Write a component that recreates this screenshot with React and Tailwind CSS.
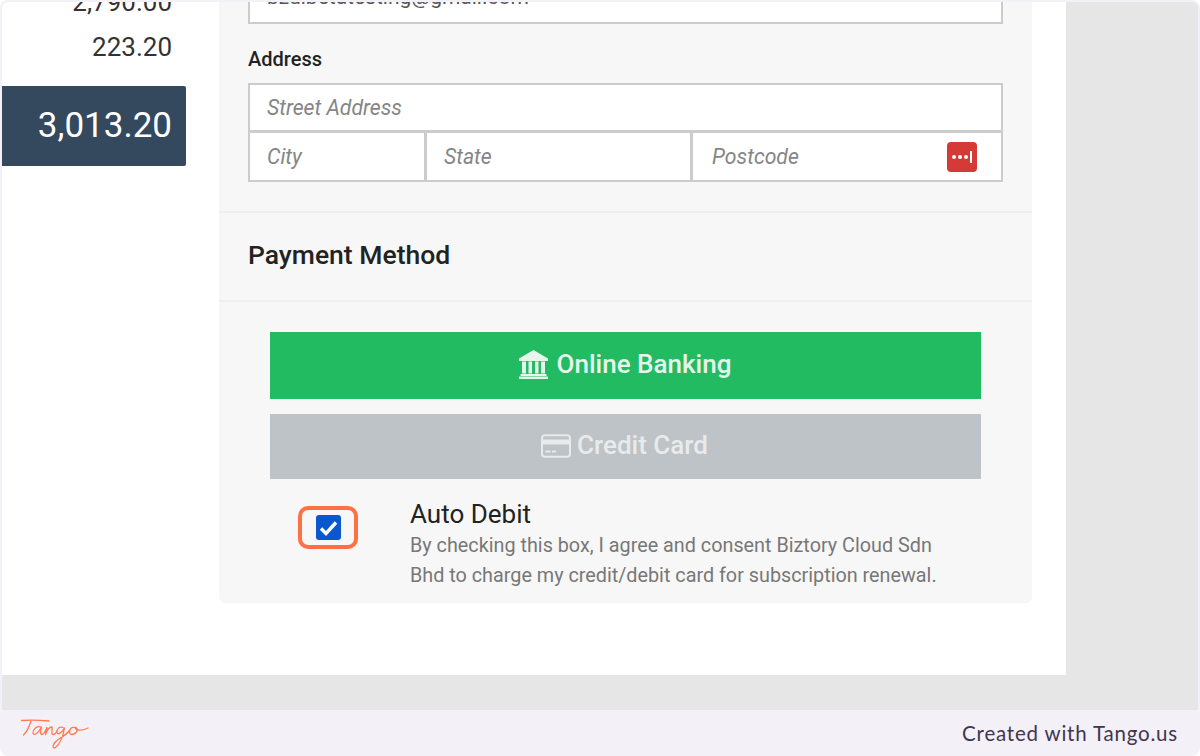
const BankIcon = () => (
  <svg width="31" height="29" viewBox="0 0 30 29" fill="currentColor">
    <path d="M15 0L29.5 8.5V11H0.5V8.5Z" />
    <rect x="3.5" y="11.5" width="4" height="12" />
    <rect x="10" y="11.5" width="3.5" height="12" />
    <rect x="16.5" y="11.5" width="3.5" height="12" />
    <rect x="22.5" y="11.5" width="4" height="12" />
    <rect x="2" y="24" width="26" height="2" />
    <rect x="0.5" y="26.5" width="29" height="2.5" />
  </svg>
)

const CreditCardIcon = () => (
  <svg width="30" height="24" viewBox="0 0 30 24" fill="none">
    <rect x="1" y="1.2" width="28" height="21.6" rx="3" stroke="currentColor" strokeWidth="2" />
    <rect x="1" y="5.5" width="28" height="5" fill="currentColor" />
    <rect x="4.5" y="16.5" width="5" height="2" fill="currentColor" />
    <rect x="11" y="16.5" width="4" height="2" fill="currentColor" />
  </svg>
)

const TangoLogo = () => (
  <svg width="70" height="34" viewBox="0 0 70 34" fill="none" stroke="#ff7a50" strokeWidth="1.3" strokeLinecap="round" strokeLinejoin="round">
    <path d="M1.5 4.5C10 4 20 4.2 29 5" />
    <path d="M11 5C9.5 10 7.5 15 3.5 19" />
    <path d="M21 11C17 9.5 13 13 13 17C13.5 20 18 18 21.5 11C20.5 14 20 18.5 22 18.5C24 18.5 25.5 15 27 11.5C26.5 14 26 16.5 25.5 18.5C27 14.5 29.5 11 31.5 11C33 11 31.5 15 32 17.5C32.5 19.5 35 18.5 37 15" />
    <path d="M43 11.5C39.5 10 36.5 13 37 16.5C37.5 19 41 18 44.5 12C43.5 18 41 27 35.5 31.5C32 33.5 32 28 37.5 24C42 21 47 18 49.5 14.5" />
    <path d="M55 11.5C51.5 10.5 49 13.5 49.5 16.5C50 19.5 54 19 56.5 16C58 13.5 57 11.5 55 11.5C56 14.5 60 15.5 68 12" />
  </svg>
)

const Field = ({ placeholder, className = '', children }) => (
  <div className={`flex items-center justify-between border-2 border-[#cccccc] bg-white pl-[17px] text-[21.2px] italic text-[#858585] ${className}`}>
    <span>{placeholder}</span>
    {children}
  </div>
)

export default function App() {
  return (
    <div className="flex h-[756px] w-[1200px] flex-col overflow-hidden rounded-[8px] bg-[#f3f1f7] font-['Roboto',sans-serif]">
      {/* Screenshot area */}
      <div className="h-[710px] shrink-0 overflow-hidden pl-[2px] pr-[2px] pt-[2px]">
        <div className="h-[708px] overflow-hidden rounded-t-md bg-[#e6e6e6]">
          <div className="flex h-[673px] w-[1064px] bg-white">
            {/* Totals */}
            <div className="flex w-[217px] shrink-0 flex-col">
              <div className="-mt-[15px] w-[184px] pr-[14px] text-right text-[26px] leading-[30px] text-[#333333]">
                <p>2,790.00</p>
                <p className="mt-[15px]">223.20</p>
              </div>
              <div className="mt-[24px] flex h-[80px] w-[184px] items-center justify-end rounded-r-[2px] bg-[#34495e] pr-[14px] text-[35px] text-white">
                3,013.20
              </div>
            </div>

            {/* Checkout card */}
            <div className="h-[601px] w-[813px] shrink-0 rounded-b-md bg-[#f7f7f7]">
              <div className="flex h-[211px] flex-col border-b-2 border-[#eeeeee] px-[29px]">
                <div className="-mt-[30px] flex h-[52px] shrink-0 items-center border-2 border-[#cccccc] bg-white pl-[17px] text-[21px] text-[#555555]">
                  bzdibetatesting@gmail.com
                </div>
                <p className="mt-[23px] text-[20px] font-medium leading-[24px] text-[#222222]">Address</p>
                <Field placeholder="Street Address" className="mt-[12px] h-[49px]" />
                <div className="-mt-[1px] flex h-[51px]">
                  <Field placeholder="City" className="w-[178px]" />
                  <Field placeholder="State" className="-ml-[1px] w-[267px]" />
                  <Field placeholder="Postcode" className="-ml-[1px] flex-1 pl-[19px] pr-[24px]">
                    <span className="flex h-[30px] w-[30px] items-center justify-center gap-[2px] rounded-[4px] bg-[#d63a36]">
                      <span className="h-[4px] w-[4px] rounded-full bg-white" />
                      <span className="h-[4px] w-[4px] rounded-full bg-white" />
                      <span className="h-[4px] w-[4px] rounded-full bg-white" />
                      <span className="h-[12px] w-[2px] bg-white" />
                    </span>
                  </Field>
                </div>
              </div>

              <div className="flex h-[89px] items-center border-b-2 border-[#eeeeee] px-[29px] pb-[4px] text-[26.5px] font-medium text-[#222222]">
                Payment Method
              </div>

              <div className="px-[51px] pt-[30px]">
                <div className="flex h-[67px] items-center justify-center gap-[8px] bg-[#22bb62] pb-[3px] pr-[2px] text-[26px] font-medium text-[#e6f6ec]">
                  <BankIcon />
                  Online Banking
                </div>
                <div className="mt-[15px] flex h-[65px] items-center justify-center gap-[6px] bg-[#bdc3c7] pb-[2px] pr-[2px] text-[26px] font-medium text-[#e8eaeb]">
                  <CreditCardIcon />
                  Credit Card
                </div>
                <div className="mt-[18px] flex">
                  <div className="ml-[28px] mt-[9px] flex h-[43px] w-[60px] items-center justify-center rounded-[10px] border-[4px] border-[#ff7043]">
                    <span className="flex h-[25px] w-[25px] items-center justify-center rounded-[3px] bg-[#0b57d0]">
                      <svg width="19" height="16" viewBox="0 0 19 16" fill="none" stroke="white" strokeWidth="3.4">
                        <path d="M2 8.5L7 13.5L17 2.5" />
                      </svg>
                    </span>
                  </div>
                  <div className="ml-[52px]">
                    <p className="text-[26px] leading-[34px] text-[#222222]">Auto Debit</p>
                    <p className="w-[540px] text-[19.8px] leading-[30px] text-[#777777]">
                      By checking this box, I agree and consent Biztory Cloud Sdn Bhd to charge my credit/debit card for subscription renewal.
                    </p>
                  </div>
                </div>
              </div>
            </div>
          </div>
        </div>
      </div>

      {/* Footer */}
      <div className="flex flex-1 items-center justify-between pl-[20px] pr-[22px]">
        <TangoLogo />
        <span className="font-['Lato',sans-serif] text-[20.5px] tracking-[0.8px] text-[#41354f]">Created with Tango.us</span>
      </div>
    </div>
  )
}
